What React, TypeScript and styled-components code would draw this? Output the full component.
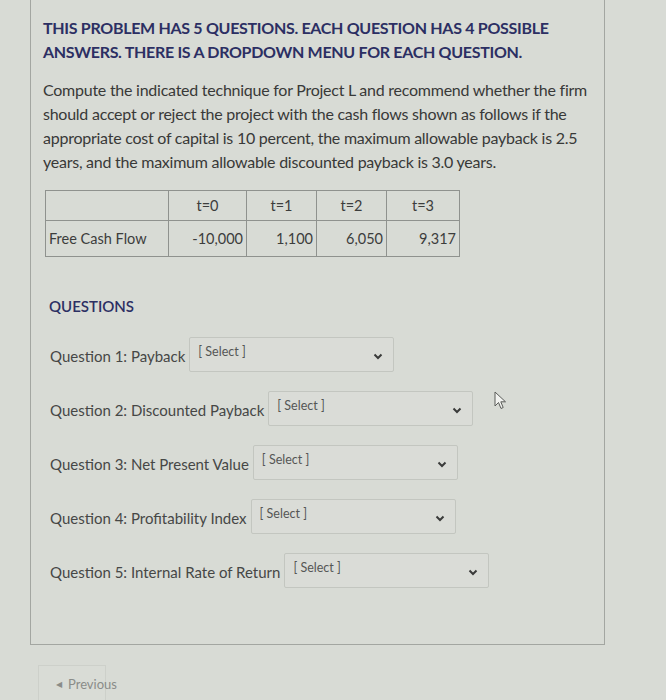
import React from 'react'
import styled, { createGlobalStyle } from 'styled-components'

const GlobalStyle = createGlobalStyle`
  html, body {
    margin: 0;
    padding: 0;
    background: #d8dbd5;
  }
  body {
    font-family: Lato, "Open Sans", "Liberation Sans", sans-serif;
    color: #3b3c3b;
  }
`

const Page = styled.div`
  position: relative;
  width: 666px;
  height: 700px;
  overflow: hidden;
  box-sizing: border-box;
  padding: 0 61px 0 30px;
  background: #d8dbd5;
`

const Panel = styled.div`
  border: 1px solid #a3a6a1;
  border-top: none;
  padding: 16px 12px 56px 12px;
`

const Heading = styled.h2`
  margin: 0;
  font-size: 16px;
  line-height: 24px;
  font-weight: 700;
  color: #2c2f63;
  letter-spacing: -0.3px;
  white-space: nowrap;
`

const Paragraph = styled.p`
  margin: 14px 0 0 0;
  font-size: 16px;
  line-height: 24px;
  color: #383938;
  letter-spacing: -0.25px;
  white-space: nowrap;
`

const Table = styled.table`
  margin: 16px 0 0 2px;
  border-collapse: collapse;
  font-size: 14.5px;
  color: #3c3d3c;
`

const Cell = styled.td<{ $w: number; $align?: string; $h: number }>`
  width: ${p => p.$w}px;
  height: ${p => p.$h}px;
  border: 1px solid #8f928e;
  padding: 0 3px;
  text-align: ${p => p.$align || 'left'};
  box-sizing: border-box;
`

const SectionTitle = styled.h3`
  margin: 38px 0 0 6px;
  font-size: 15px;
  line-height: 22px;
  font-weight: 600;
  color: #2c2f63;
`

const QuestionList = styled.div`
  display: flex;
  flex-direction: column;
  gap: 19px;
  margin: 20px 0 0 7px;
`

const QuestionRow = styled.div`
  display: flex;
  align-items: center;
  gap: 4px;
`

const QuestionLabel = styled.span`
  font-size: 15px;
  color: #464746;
  padding-top: 2px;
`

const SelectBox = styled.div`
  width: 205px;
  height: 35px;
  box-sizing: border-box;
  border: 1px solid #c3c6c0;
  border-radius: 2px;
  display: flex;
  align-items: flex-start;
  justify-content: space-between;
  padding: 6px 10px 0 8px;
  background: #dadcd7;
`

const SelectText = styled.span`
  font-size: 12.5px;
  color: #555655;
`

const Chevron = styled.svg`
  margin-top: 9px;
`

const Footer = styled.div`
  padding: 20px 0 0 8px;
`

const PrevButton = styled.div`
  width: 68px;
  height: 40px;
  box-sizing: border-box;
  border: 1px solid #cdd0ca;
  border-bottom: none;
  background: #d9dcd6;
  display: flex;
  align-items: center;
  gap: 6px;
  padding-left: 17px;
  padding-bottom: 4px;
  font-size: 13px;
  color: #8a8c89;
`

const Arrow = styled.span`
  font-size: 8px;
`

const Cursor = styled.svg`
  position: absolute;
  left: 494px;
  top: 391px;
`

const header = ['', 't=0', 't=1', 't=2', 't=3']
const values = ['Free Cash Flow', '-10,000', '1,100', '6,050', '9,317']
const widths = [123, 78, 70, 70, 73]

const questions = [
  'Question 1: Payback',
  'Question 2: Discounted Payback',
  'Question 3: Net Present Value',
  'Question 4: Profitability Index',
  'Question 5: Internal Rate of Return',
]

export default function App() {
  return (
    <Page>
      <GlobalStyle />
      <Panel>
        <Heading>
          THIS PROBLEM HAS 5 QUESTIONS. EACH QUESTION HAS 4 POSSIBLE
          <br />
          ANSWERS. THERE IS A DROPDOWN MENU FOR EACH QUESTION.
        </Heading>
        <Paragraph>
          Compute the indicated technique for Project L and recommend whether the firm
          <br />
          should accept or reject the project with the cash flows shown as follows if the
          <br />
          appropriate cost of capital is 10 percent, the maximum allowable payback is 2.5
          <br />
          years, and the maximum allowable discounted payback is 3.0 years.
        </Paragraph>
        <Table>
          <tbody>
            <tr>
              {header.map((h, i) => (
                <Cell key={i} $w={widths[i]} $h={30} $align="center">
                  {h}
                </Cell>
              ))}
            </tr>
            <tr>
              {values.map((v, i) => (
                <Cell key={i} $w={widths[i]} $h={36} $align={i === 0 ? 'left' : 'right'}>
                  {v}
                </Cell>
              ))}
            </tr>
          </tbody>
        </Table>
        <SectionTitle>QUESTIONS</SectionTitle>
        <QuestionList>
          {questions.map(q => (
            <QuestionRow key={q}>
              <QuestionLabel>{q}</QuestionLabel>
              <SelectBox>
                <SelectText>[ Select ]</SelectText>
                <Chevron width="10" height="7" viewBox="0 0 10 7">
                  <path d="M1.5 1.5 L5 5 L8.5 1.5" fill="none" stroke="#3a3b3a" strokeWidth="2" />
                </Chevron>
              </SelectBox>
            </QuestionRow>
          ))}
        </QuestionList>
      </Panel>
      <Footer>
        <PrevButton>
          <Arrow>◀</Arrow>
          Previous
        </PrevButton>
      </Footer>
      <Cursor width="14" height="20" viewBox="0 0 14 20">
        <path d="M1 1 L1 15 L4.5 11.5 L7 17.5 L9.2 16.5 L6.8 10.8 L11.5 10.8 Z" fill="#f2f3f0" stroke="#5a5c59" strokeWidth="1" />
      </Cursor>
    </Page>
  )
}
